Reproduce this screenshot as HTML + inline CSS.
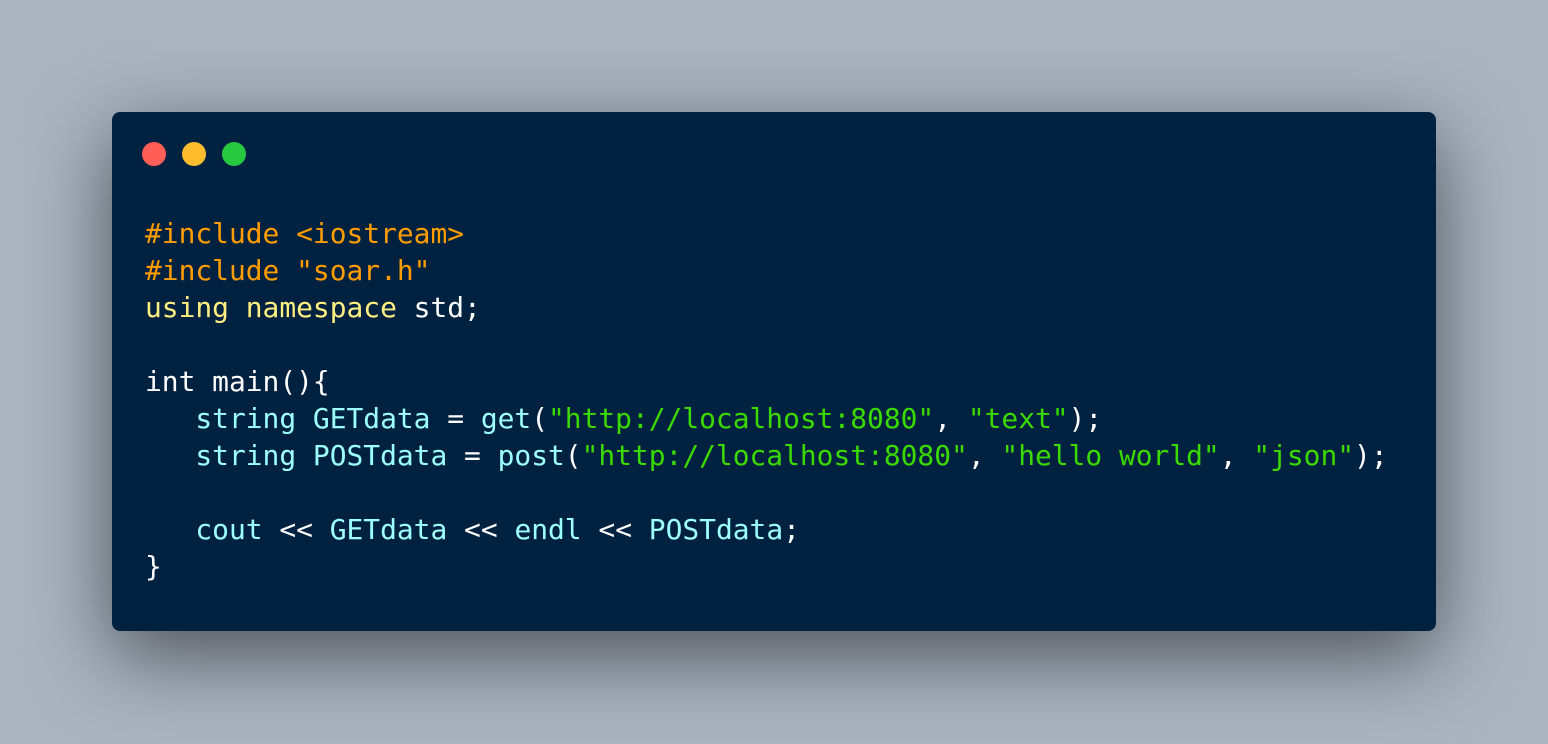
<!DOCTYPE html>
<html><head><style>
html,body{margin:0;padding:0;}
body{width:1548px;height:744px;background:#a9b4c0;position:relative;overflow:hidden;}
.win{position:absolute;left:112px;top:112px;width:1324px;height:519px;background:#002240;border-radius:8px;box-shadow:0 24px 80px rgba(0,0,0,0.55);}
.dot{position:absolute;top:30px;width:24px;height:24px;border-radius:50%;}
pre{position:absolute;left:33px;top:103px;margin:0;font-family:"DejaVu Sans Mono","Liberation Mono",monospace;font-size:27.9px;line-height:37px;color:#fff;}
.o{color:#ff9d00}.y{color:#ffee80}.c{color:#9effff}.g{color:#3ad900}
</style></head><body>
<div class="win">
<div class="dot" style="left:30px;background:#ff5f56"></div>
<div class="dot" style="left:70px;background:#ffbd2e"></div>
<div class="dot" style="left:110px;background:#27c93f"></div>
<pre><span class="o">#include &lt;iostream&gt;</span>
<span class="o">#include "soar.h"</span>
<span class="y">using namespace</span> std;

int main(){
   <span class="c">string GETdata</span> = <span class="c">get</span>(<span class="g">"http://localhost:8080"</span>, <span class="g">"text"</span>);
   <span class="c">string POSTdata</span> = <span class="c">post</span>(<span class="g">"http://localhost:8080"</span>, <span class="g">"hello world"</span>, <span class="g">"json"</span>);

   <span class="c">cout</span> &lt;&lt; <span class="c">GETdata</span> &lt;&lt; <span class="c">endl</span> &lt;&lt; <span class="c">POSTdata</span>;
}</pre>
</div>
</body></html>
